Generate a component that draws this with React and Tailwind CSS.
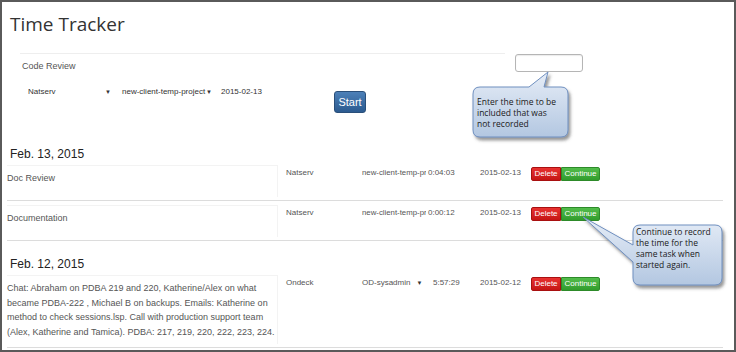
import React from "react";

const entries13 = [
  { desc: "Doc Review", client: "Natserv", project: "new-client-temp-project", time: "0:04:03", date: "2015-02-13" },
  { desc: "Documentation", client: "Natserv", project: "new-client-temp-project", time: "0:00:12", date: "2015-02-13" },
];

const Buttons = () => (
  <div className="mt-[2px] flex">
    <button className="h-[14px] w-[30px] rounded-l-[2px] border border-[#a81010] bg-gradient-to-b from-[#e8312f] to-[#c51414] text-[8px] leading-[12px] text-white">
      Delete
    </button>
    <button className="h-[14px] w-[39px] rounded-r-[2px] border border-[#2d8a29] bg-gradient-to-b from-[#52bd4b] to-[#319c2c] text-[8px] leading-[12px] text-white">
      Continue
    </button>
  </div>
);

const Row = ({ entry, tall }) => (
  <div className="ml-[5px] flex w-[716px] items-start border-b border-[#dcdcdc] pt-[4px] pb-[3px]">
    <div
      className={`w-[271px] border-t border-r border-[#f3f3f3] pt-[5px] text-[9px] leading-[14.5px] text-[#555] ${
        tall ? "h-[69px]" : "h-[32px]"
      }`}
    >
      {entry.desc}
    </div>
    <div className="ml-[8px] mt-[1px] w-[76px] text-[8px] leading-[14px] text-[#555]">{entry.client}</div>
    {entry.select ? (
      <div className="mt-[1px] flex w-[71px] items-center text-[8px] leading-[14px] text-[#555]">
        <span>{entry.project}</span>
        <span className="ml-[6px] text-[6px] text-[#333]">▼</span>
      </div>
    ) : (
      <div className="mt-[1px] w-[66px] overflow-hidden whitespace-nowrap pr-[2px] text-[7.8px] leading-[14px] text-[#555]">
        <div className="w-[64px] overflow-hidden">{entry.project}</div>
      </div>
    )}
    <div className={`mt-[1px] text-[8px] leading-[14px] text-[#555] ${entry.select ? "w-[47px]" : "w-[52px]"}`}>
      {entry.time}
    </div>
    <div className="mt-[1px] w-[51px] text-[8px] leading-[14px] text-[#555]">{entry.date}</div>
    <Buttons />
  </div>
);

export default function App() {
  return (
    <div className="relative h-[352px] w-[736px] overflow-hidden bg-white font-['Liberation_Sans',Arial,sans-serif]">
      <div className="h-full border-2 border-[#5a5a5a]">
        <h1 className="ml-[8px] mt-[9px] font-['Open_Sans',sans-serif] text-[19px] leading-[26px] text-[#333]">
          Time Tracker
        </h1>

        {/* new task form */}
        <div className="mt-[16px]">
          <div className="flex items-start">
            <div className="ml-[18px] flex h-[27px] w-[485px] items-center border-t border-[#eeeeee] pl-[2px] text-[9px] text-[#555]">
              Code Review
            </div>
            <div className="ml-[10px] mt-[1px] h-[18px] w-[68px] rounded-[3px] border border-[#b5b5b5] bg-white shadow-[inset_0_1px_1px_rgba(0,0,0,0.08)]" />
          </div>
          <div className="mt-[5px] flex items-start">
            <div className="ml-[22px] flex h-[14px] w-[90px] items-center justify-between pl-[4px] pr-[3px] text-[8px] text-[#333]">
              <span>Natserv</span>
              <span className="text-[6px]">▼</span>
            </div>
            <div className="ml-[4px] flex h-[14px] w-[98px] items-center justify-between pl-[4px] pr-[4px] text-[8px] text-[#333]">
              <span>new-client-temp-project</span>
              <span className="text-[6px]">▼</span>
            </div>
            <div className="ml-[5px] flex h-[14px] w-[113px] items-center text-[8px] text-[#333]">2015-02-13</div>
            <button className="mt-[6px] h-[22px] w-[32px] rounded-[3px] border border-[#2a4f7a] bg-gradient-to-b from-[#4c80b8] to-[#2c5b90] text-[11px] text-white">
              Start
            </button>
          </div>
        </div>

        <div className="ml-[8px] mt-[34px] text-[12px] leading-[14px] text-[#222]">Feb. 13, 2015</div>
        {entries13.map((e) => (
          <Row key={e.desc} entry={e} />
        ))}

        <div className="ml-[8px] mt-[16px] text-[12px] leading-[14px] text-[#222]">Feb. 12, 2015</div>
        <Row
          tall
          entry={{
            desc: "Chat: Abraham on PDBA 219 and 220, Katherine/Alex on what became PDBA-222 , Michael B on backups. Emails: Katherine on method to check sessions.lsp. Call with production support team (Alex, Katherine and Tamica). PDBA: 217, 219, 220, 222, 223, 224.",
            client: "Ondeck",
            project: "OD-sysadmin",
            select: true,
            time: "5:57:29",
            date: "2015-02-12",
          }}
        />
      </div>

      {/* callouts */}
      <svg className="pointer-events-none absolute left-0 top-0" width="736" height="352">
        <defs>
          <linearGradient id="cg" x1="0" y1="0" x2="0" y2="1">
            <stop offset="0" stopColor="#e6edf7" />
            <stop offset="1" stopColor="#b3c7e1" />
          </linearGradient>
          <filter id="sh" x="-20%" y="-20%" width="140%" height="140%">
            <feDropShadow dx="2" dy="3" stdDeviation="1.5" floodColor="#444" floodOpacity="0.55" />
          </filter>
        </defs>
        <path
          d="M480 87 H529 L548 72 L544 87 H561 Q568 87 568 94 V130 Q568 137 561 137 H480 Q473 137 473 130 V94 Q473 87 480 87 Z"
          fill="url(#cg)"
          stroke="#6f8fbf"
          strokeWidth="1"
          filter="url(#sh)"
        />
        <path
          d="M640 225 H715 Q722 225 722 232 V278 Q722 285 715 285 H640 Q633 285 633 278 V262 L583 217 L633 245 V232 Q633 225 640 225 Z"
          fill="url(#cg)"
          stroke="#6f8fbf"
          strokeWidth="1"
          filter="url(#sh)"
        />
      </svg>
      <div className="absolute left-[477px] top-[96px] font-['Open_Sans',sans-serif] text-[8.5px] leading-[11px] text-[#1a1a1a]">
        Enter the time to be
        <br />
        included that was
        <br />
        not recorded
      </div>
      <div className="absolute left-[636px] top-[226px] font-['Open_Sans',sans-serif] text-[8.5px] leading-[11px] text-[#1a1a1a]">
        Continue to record
        <br />
        the time for the
        <br />
        same task when
        <br />
        started again.
      </div>
    </div>
  );
}
